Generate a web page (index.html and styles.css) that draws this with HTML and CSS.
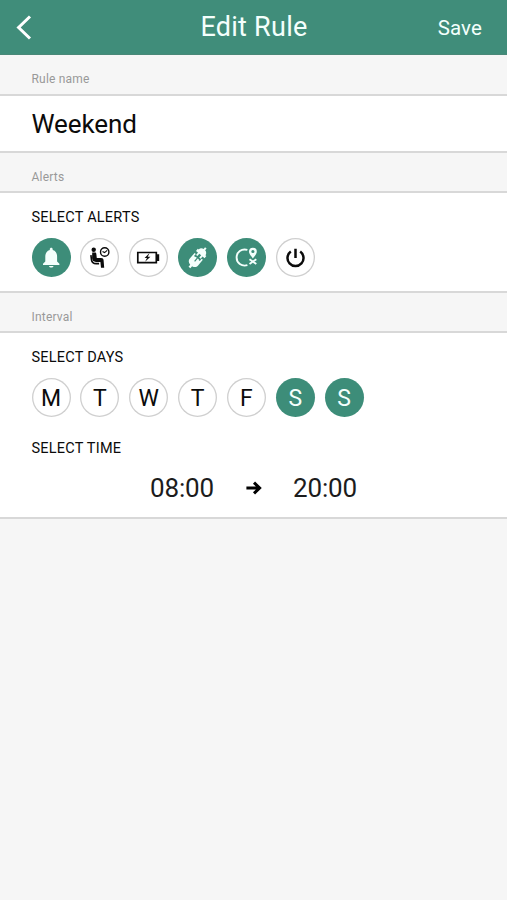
FILE: index.html
```html
<!DOCTYPE html>
<html lang="en">
<head>
<meta charset="utf-8">
<title>Edit Rule</title>
<link rel="stylesheet" href="styles.css">
</head>
<body>
<header class="bar">
  <svg class="back" viewBox="0 0 16 26"><path d="M14 2.5 2.6 13.5 14 24.5"/></svg>
  <h1 class="title">Edit Rule</h1>
  <span class="save">Save</span>
</header>
<main>
  <h2 class="label first">Rule name</h2>
  <section class="panel name">Weekend</section>
  <h2 class="label">Alerts</h2>
  <section class="panel alerts">
    <h3 class="heading">SELECT ALERTS</h3>
    <div class="row">
      <span class="chip on"><svg viewBox="0 0 39 39"><path class="fill" d="M11 27.1v-1.4l2.3-2.2v-5.1c0-3.4 1.6-5.6 4.5-6.5v-.6c0-2 2.9-2 2.9 0v.6c2.9.9 4.4 3.1 4.4 6.5v5.1l2.3 2.2v1.4zM17 27.9h4.5c-.3 2.3-4.2 2.3-4.5 0z"/></svg></span>
      <span class="chip"><svg viewBox="0 0 39 39"><circle class="fill" cx="13.7" cy="11.7" r="2.2"/><path class="fill" d="M12.2 14.4h2.6c1 0 1.4.5 1.5 1.3l.5 4.4h4.2c1.8 0 2.4.8 2.6 2.2l.6 7.4h-3.2l-.6-5.8h-4.4c-2.6 0-3.6-1.3-3.9-3.6z"/><path class="line" stroke-width="1.6" d="M10.9 17.2l.6 4.6c.4 2.7 2.1 3.8 4.6 3.8h3"/><circle class="line" stroke-width="1.4" cx="24.7" cy="14" r="4.2"/><path class="line" stroke-width="1.1" d="m22.5 13.4 2.1 1.2 2.6-2.2"/></svg></span>
      <span class="chip"><svg viewBox="0 0 39 39"><path class="line" stroke-width="1.7" d="M8.8 14.5h18.5v10.2H8.8z"/><path class="fill" d="M27.7 16.3h2.5v6.6h-2.5zM20 15.5l-4.4 4.6h2.4l-1.9 3.7 5.3-5.1h-2.7l1.7-3.2z"/></svg></span>
      <span class="chip on"><svg viewBox="0 0 39 39"><g transform="translate(19.7 19.6) rotate(40)"><path class="fill" d="M-1-12.6h2v2.2C3.2-10 4.2-8.6 4.4-6.8h1.2V-4H3v3H1.2v-3h-2.4v3H-3v-3h-2.6v-2.8h1.2c.2-1.8 1.2-3.2 3.4-3.6zM-5.4-1.6h1.6v2.8h1.6V.6h1.6v4.2h1.2V.6h1.6v.6h1.6v-2.8h1.6v7.4c0 2.6-1.6 4-4.2 4.4v2.6H-1.2v-2.6c-2.6-.4-4.2-1.8-4.2-4.4z"/></g></svg></span>
      <span class="chip on"><svg viewBox="0 0 39 39"><path class="line" stroke-width="1.9" d="M20.4 11.9c-5.9-1.6-10.8 2.1-10.8 7.6s4.9 9.3 10.8 7.7"/><path class="fill" fill-rule="evenodd" d="M25.9 20.6c-1.2-2.2-3.9-4.2-3.9-7a3.9 3.9 0 0 1 7.8 0c0 2.8-2.7 4.8-3.9 7zm0-8.7a1.6 1.6 0 1 0 0 3.2 1.6 1.6 0 0 0 0-3.2z"/><path class="line" stroke-width="1.9" d="m22.5 21.2 6.8 4.8m0-4.8-6.8 4.8"/></svg></span>
      <span class="chip"><svg viewBox="0 0 39 39"><path class="line" stroke-width="2.5" d="M14.8 13.6a8 8 0 1 0 9.4 0M19.5 10.7v9.3"/></svg></span>
    </div>
  </section>
  <h2 class="label">Interval</h2>
  <section class="panel interval">
    <h3 class="heading">SELECT DAYS</h3>
    <div class="row days">
      <span class="chip">M</span><span class="chip">T</span><span class="chip">W</span><span class="chip">T</span><span class="chip">F</span><span class="chip on">S</span><span class="chip on">S</span>
    </div>
    <h3 class="heading time-heading">SELECT TIME</h3>
    <div class="times">
      <span>08:00</span>
      <svg class="arrow" viewBox="0 0 16 14"><path d="M.4 7h13.2M8 1.6 13.6 7 8 12.4"/></svg>
      <span>20:00</span>
    </div>
  </section>
</main>
</body>
</html>
```
FILE: styles.css
```css
* { box-sizing: border-box; }
body {
  margin: 0;
  background: #f6f6f6;
  color: #0b0b0b;
  font-family: Roboto, "Liberation Sans", sans-serif;
}
h1, h2, h3 { margin: 0; font-weight: 400; }
.bar {
  display: grid;
  grid-template-columns: 1fr auto 1fr;
  align-items: center;
  height: 55px;
  padding: 0 25px 0 16px;
  background: #408d7a;
  border-bottom: 1px solid #4a8878;
  color: #f4fffc;
}
.back { width: 16px; height: 26px; }
.back path { fill: none; stroke: #fff; stroke-width: 3; }
.title { font-size: 27px; letter-spacing: .25px; line-height: 30px; padding: 0 0 1px 10px; white-space: nowrap; }
.save { justify-self: end; font-size: 20.5px; letter-spacing: .1px; line-height: 24px; padding-top: 2px; }
.label {
  height: 40px;
  padding: 9px 31.5px 0;
  border-bottom: 2px solid #d8d8d8;
  color: #999;
  font-size: 12px;
  letter-spacing: .2px;
  line-height: 30px;
}
.label.first { height: 41px; }
.panel {
  padding: 0 31.5px;
  background: #fff;
  border-bottom: 2px solid #d8d8d8;
}
.name { height: 57px; font-size: 26px; letter-spacing: -.1px; line-height: 57px; }
.alerts { height: 100px; padding-top: 15px; }
.interval { height: 186px; padding-top: 15px; }
.heading { font-size: 14.5px; letter-spacing: .22px; line-height: 20px; }
.row { display: flex; gap: 9.87px; margin-top: 10px; }
.chip {
  display: flex;
  flex: none;
  align-items: center;
  justify-content: center;
  width: 39px;
  height: 39px;
  border-radius: 50%;
  box-shadow: inset 0 0 0 1.3px #cfcfcf;
  font-size: 23px;
  line-height: 39px;
}
.days .chip { padding-top: 2px; }
.chip.on { background: #3d8d79; box-shadow: none; color: #f4fffc; }
.chip svg { width: 39px; height: 39px; }
.fill { fill: currentColor; }
.line { fill: none; stroke: currentColor; }
.time-heading { margin-top: 22px; }
.times {
  display: flex;
  align-items: center;
  justify-content: center;
  gap: 31.5px;
  margin-top: 14px;
  font-size: 26px;
  letter-spacing: -.15px;
  line-height: 30px;
  color: #1c1c1c;
}
.arrow { width: 16px; height: 14px; }
.arrow path { fill: none; stroke: #000; stroke-width: 3; }
```
